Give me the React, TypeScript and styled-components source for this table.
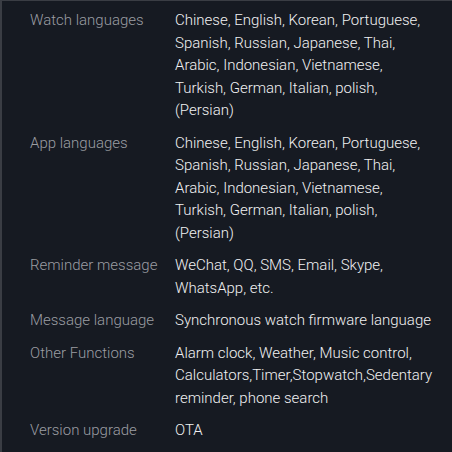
import React from 'react';
import styled, { createGlobalStyle } from 'styled-components';

const GlobalStyle = createGlobalStyle`
  html, body {
    margin: 0;
    padding: 0;
    background: #161a22;
  }
  body {
    font-family: Roboto, "Noto Sans", sans-serif;
  }
`;

const SpecSheet = styled.div`
  box-sizing: border-box;
  width: 452px;
  min-height: 452px;
  background: #161a22;
  border-top: 1px solid #3a3d44;
  border-left: 2px solid #3a3d44;
  padding: 8px 0 0 28px;
  display: flex;
  flex-direction: column;
  gap: 10px;
`;

const SpecRow = styled.div`
  display: grid;
  grid-template-columns: 145px 262px;
  font-size: 15px;
  font-weight: 300;
  line-height: 22.5px;
`;

const Label = styled.div`
  color: #9b9da2;
`;

const Value = styled.div`
  color: #f1f1f2;
`;

const specs: [string, string][] = [
  ['Watch languages', 'Chinese, English, Korean, Portuguese, Spanish, Russian, Japanese, Thai, Arabic, Indonesian, Vietnamese, Turkish, German, Italian, polish, (Persian)'],
  ['App languages', 'Chinese, English, Korean, Portuguese, Spanish, Russian, Japanese, Thai, Arabic, Indonesian, Vietnamese, Turkish, German, Italian, polish, (Persian)'],
  ['Reminder message', 'WeChat, QQ, SMS, Email, Skype, WhatsApp, etc.'],
  ['Message language', 'Synchronous watch firmware language'],
  ['Other Functions', 'Alarm clock, Weather, Music control, Calculators,Timer,Stopwatch,Sedentary reminder, phone search'],
  ['Version upgrade', 'OTA'],
];

const App: React.FC = () => {
  return (
    <>
      <GlobalStyle />
      <SpecSheet>
        {specs.map(([label, value]) => (
          <SpecRow key={label}>
            <Label>{label}</Label>
            <Value>{value}</Value>
          </SpecRow>
        ))}
      </SpecSheet>
    </>
  );
};

export default App;
